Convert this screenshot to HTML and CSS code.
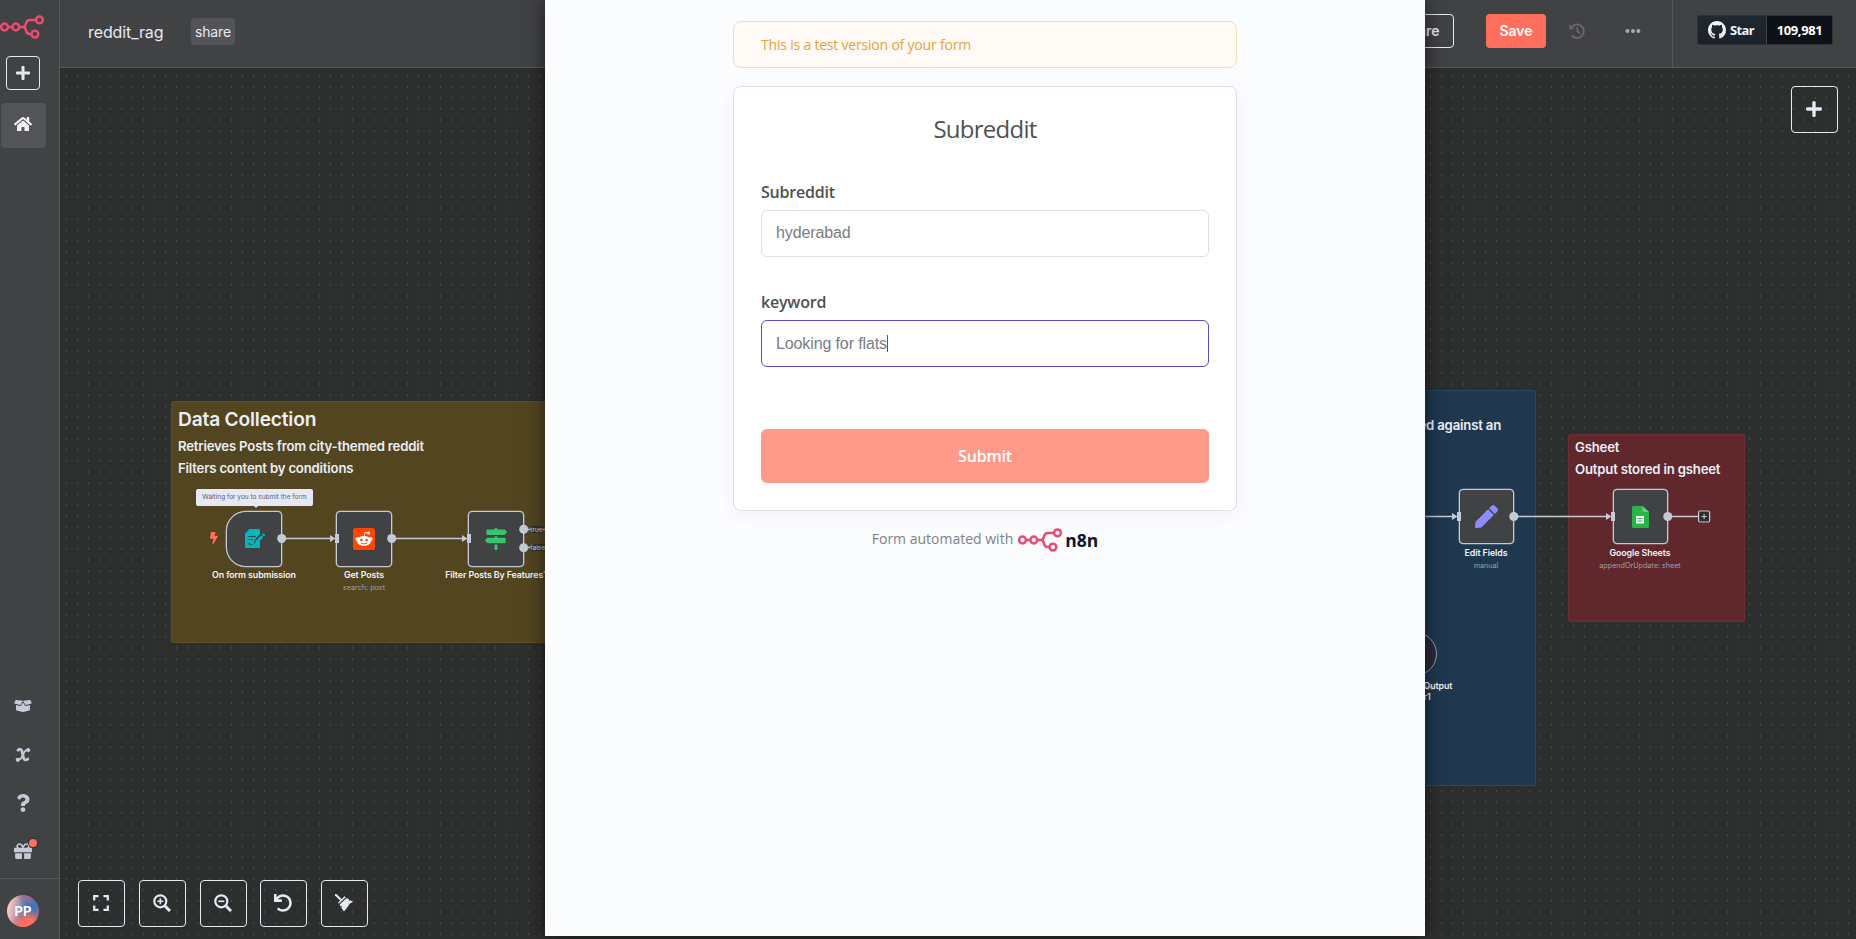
FILE: index.html
```
<!DOCTYPE html>
<html lang="en">
<head>
<meta charset="utf-8">
<title>reddit_rag</title>
<link rel="stylesheet" href="styles.css">
</head>
<body>
<svg class="defs" width="0" height="0">
  <symbol id="n8n" viewBox="0 0 44 24"><g fill="none" stroke="#ea4b71" stroke-width="2.5"><circle cx="4.5" cy="12" r="3.4"/><circle cx="15.8" cy="12" r="3.4"/><circle cx="39.5" cy="4.9" r="3.4"/><circle cx="34.900" cy="19.1" r="3.4"/><path d="M8 12h4.4M19.2 12h3.3c1.700 0 2.700-.8 3.100-2.300l.6-1.900c.6-1.900 1.800-2.900 3.700-2.900H36M22.500 12c1.700 0 2.700.8 3.100 2.300l.5 1.900c.6 1.900 1.700 2.900 3.500 2.900h2"/></g></symbol>
  <symbol id="plus" viewBox="0 0 448 512"><path d="M416 208H272V64c0-17.670-14.330-32-32-32h-32c-17.670 0-32 14.330-32 32v144H32c-17.670 0-32 14.330-32 32v32c0 17.670 14.330 32 32 32h144v144c0 17.670 14.330 32 32 32h32c17.670 0 32-14.330 32-32V304h144c17.670 0 32-14.330 32-32v-32c0-17.670-14.330-32-32-32z"/></symbol>
</svg>
<div class="app">
  <nav class="sidebar">
    <svg class="logo"><use href="#n8n"/></svg>
    <button class="side-add"><svg width="14" height="16"><use href="#plus"/></svg></button>
    <div class="side-home"><svg width="18" height="16" viewBox="0 0 576 512"><path d="M280.370 148.260L96 300.110V464a16 16 0 0 0 16 16l112.060-.29a16 16 0 0 0 15.920-16V368a16 16 0 0 1 16-16h64a16 16 0 0 1 16 16v95.640a16 16 0 0 0 16 16.050L464 480a16 16 0 0 0 16-16V300L295.670 148.260a12.190 12.190 0 0 0-15.300 0zM571.600 251.470L488 182.560V44.050a12 12 0 0 0-12-12h-56a12 12 0 0 0-12 12v72.610L318.470 43a48 48 0 0 0-61 0L4.340 251.470a12 12 0 0 0-1.600 16.900l25.500 31A12 12 0 0 0 45.150 301l235.220-193.740a12.190 12.190 0 0 1 15.300 0L530.900 301a12 12 0 0 0 16.900-1.600l25.500-31a12 12 0 0 0-1.700-16.930z"/></svg></div>
    <div class="side-links">
      <div class="side-link"><svg width="18" height="14" viewBox="0 0 640 512"><path d="M425.700 256c-16.900 0-32.800-9-41.400-23.400L320 126l-64.200 106.600c-8.700 14.500-24.600 23.500-41.500 23.500-4.500 0-9-.6-13.300-1.900L64 215v178c0 14.700 10 27.500 24.200 31l216.200 54.100c10.200 2.500 20.900 2.500 31 0L551.800 424c14.200-3.600 24.200-16.400 24.200-31V215l-137 39.100c-4.300 1.300-8.800 1.900-13.300 1.900zm212.600-112.200L586.800 41c-3.100-6.200-9.800-9.800-16.700-8.900L320 64l91.700 152.100c3.800 6.300 11.400 9.300 18.500 7.300l197.900-56.500c9.900-2.900 14.700-13.900 10.200-23.100zM53.200 41L1.700 143.800c-4.600 9.200.3 20.200 10.100 23l197.900 56.500c7.100 2 14.700-1 18.500-7.300L320 64 69.800 32.100c-6.900-.8-13.500 2.700-16.600 8.900z"/></svg></div>
      <div class="side-link var"><svg width="16" height="16" viewBox="0 0 16 16"><g fill="none" stroke="#c6cad6" stroke-linecap="round"><path d="M3 3.200C4.600 1.600 6.400 2 7 4.200l1.500 6.600c.5 2.300 2.400 2.700 4.300 1.200" stroke-width="2.800"/><path d="M13.200 3c-2.700-.4-4 2-5 4.400-1.300 3.200-2.600 5.700-5.200 5.300" stroke-width="1.800"/></g><circle cx="13.200" cy="3.100" r="2.100"/><circle cx="2.800" cy="12.800" r="2.100"/></svg></div>
      <div class="side-link var"><svg width="14" height="18" viewBox="0 0 384 512"><path d="M202.021 0C122.202 0 70.503 32.703 29.914 91.026c-7.363 10.580-5.093 25.086 5.178 32.874l43.138 32.709c10.373 7.865 25.132 6.026 33.253-4.148 25.049-31.381 43.630-49.449 82.757-49.449 30.764 0 68.816 19.799 68.816 49.631 0 22.552-18.617 34.134-48.993 51.164-35.423 19.860-82.299 44.576-82.299 106.405V320c0 13.255 10.745 24 24 24h72.471c13.255 0 24-10.745 24-24v-5.773c0-42.860 125.268-44.645 125.268-160.627C377.504 66.256 286.902 0 202.021 0zM192 373.459c-38.196 0-69.271 31.075-69.271 69.271 0 38.195 31.075 69.270 69.271 69.270s69.271-31.075 69.271-69.271-31.075-69.270-69.271-69.270z"/></svg></div>
      <div class="side-link"><svg width="18" height="18" viewBox="0 0 512 512"><path d="M32 448c0 17.700 14.300 32 32 32h160V320H32v128zm256 32h160c17.700 0 32-14.300 32-32V320H288v160zm192-320h-42.100c6.200-12.100 10.100-25.500 10.100-40 0-48.500-39.500-88-88-88-41.600 0-68.500 21.300-103 68.300-34.500-47-61.400-68.300-103-68.300-48.500 0-88 39.500-88 88 0 14.500 3.800 27.900 10.100 40H32c-17.700 0-32 14.300-32 32v80c0 8.800 7.200 16 16 16h480c8.800 0 16-7.200 16-16v-80c0-17.700-14.300-32-32-32zm-326.100 0c-22.100 0-40-17.900-40-40s17.900-40 40-40c19.900 0 34.600 3.300 86.100 80h-86.100zm206.100 0h-86.100c51.400-76.500 65.700-80 86.100-80 22.100 0 40 17.900 40 40s-17.900 40-40 40z"/></svg><span class="badge"></span></div>
    </div>
    <div class="side-user"><span class="avatar">PP</span></div>
  </nav>
  <div class="main">
    <header class="header">
      <span class="wf-name">reddit_rag</span><span class="tag">share</span>
      <div class="actions">
        <button class="btn-share">Share</button>
        <button class="btn-save">Save</button>
        <svg class="history" width="16" height="16" viewBox="0 0 16 16"><g fill="none" stroke="#67686a" stroke-width="2"><path d="M2.600 4.300A6.700 6.700 0 1 1 3.400 13" stroke-linecap="round"/><path d="M8.300 4.500v4l2.300 1.700" stroke-width="1.600" stroke-linecap="round"/></g><path d="M.3 1v5.200h5.200z" fill="#67686a"/></svg>
        <svg class="dots" width="16" height="6" viewBox="0 0 16 6"><circle cx="2.400" cy="3" r="2"/><circle cx="8" cy="3" r="2"/><circle cx="13.400" cy="3" r="2"/></svg>
        <div class="gh-area"><div class="gh"><span class="gh-star"><svg width="18" height="18" viewBox="0 0 16 16"><path d="M8 0C3.580 0 0 3.580 0 8c0 3.540 2.290 6.530 5.470 7.590.4.070.55-.17.55-.38 0-.19-.01-.82-.01-1.490-2.010.37-2.530-.49-2.690-.94-.09-.23-.48-.94-.82-1.130-.28-.15-.68-.52-.01-.53.63-.01 1.080.58 1.230.82.72 1.210 1.870.87 2.330.66.07-.52.28-.87.51-1.070-1.780-.2-3.640-.89-3.640-3.950 0-.87.31-1.590.82-2.150-.08-.2-.36-1.020.08-2.120 0 0 .67-.21 2.200.82.64-.18 1.320-.27 2-.27.68 0 1.360.09 2 .27 1.530-1.040 2.200-.82 2.200-.82.44 1.100.16 1.920.08 2.120.51.56.82 1.270.82 2.150 0 3.070-1.870 3.750-3.650 3.950.29.25.54.73.54 1.480 0 1.070-.01 1.930-.01 2.200 0 .21.15.46.55.38A8.013 8.013 0 0 0 16 8c0-4.420-3.580-8-8-8z"/></svg>Star</span><span class="gh-count">109,981</span></div></div>
      </div>
    </header>
    <div class="canvas">
      <section class="sticky yellow"><h1>Data Collection</h1><h2>Retrieves Posts from city-themed reddit</h2><h2>Filters content by conditions</h2></section>
      <section class="sticky blue"><h2>ed against an</h2></section>
      <section class="sticky red"><h2>Gsheet</h2><h2>Output stored in gsheet</h2></section>

      <svg class="edges" width="1796" height="871" viewBox="60 68 1796 871">
        <g stroke="#c6cad6" stroke-width="1.300" fill="none"><path d="M282 538.500H332M392 538.500H464M524 529.500H546M524 547.500H546M1400 516.500H1454M1514 516.500H1608M1668 516.500H1698"/></g>
      </svg>

      <div class="node trigger n-form"><svg width="20" height="20" viewBox="0 0 20 20"><path d="M0 4.500L4.500 0H14a1 1 0 0 1 1 1v4l-5.500 6-.7 3.500 3.400-.8L15 11v7a1 1 0 0 1-1 1H1a1 1 0 0 1-1-1z" fill="#00b7bc"/><path d="M2.800 7.500h8M2.800 10.500h5M3 15.500c1-2 2-2 2.200-.3.700.6 1.500.3 2.300.2" stroke="#414244" stroke-width="1.100" fill="none"/><path d="M10.300 12.200l6-6 2 2-6 6-2.500.6zM17 5.500l.7-.7q.7-.5 1.400.1l.6.6q.6.700 0 1.400l-.7.7z" fill="#00b7bc"/></svg></div>
      <div class="node n-reddit"><svg width="22" height="22" viewBox="0 0 22 22"><rect width="22" height="22" rx="2.500" fill="#ff4500"/><g fill="#fff"><ellipse cx="11" cy="13" rx="7" ry="5"/><circle cx="4.300" cy="11" r="1.900"/><circle cx="17.700" cy="11" r="1.900"/><circle cx="15.700" cy="5" r="1.500"/></g><path d="M11 8.500L12 4.400l3 .6" fill="none" stroke="#fff" stroke-width=".9"/><circle cx="8.400" cy="12" r="1.300" fill="#ff4500"/><circle cx="13.600" cy="12" r="1.300" fill="#ff4500"/><path d="M8 15q3 2 6 0" stroke="#ff4500" stroke-width=".9" fill="none"/></svg></div>
      <div class="node n-filter"><svg width="22" height="22" viewBox="0 0 512 512"><path fill="#37c66f" d="M507.310 84.690L464 41.370c-6-6-14.140-9.370-22.630-9.370H288V16c0-8.840-7.160-16-16-16h-32c-8.840 0-16 7.160-16 16v16H56c-13.250 0-24 10.750-24 24v80c0 13.250 10.750 24 24 24h385.370c8.490 0 16.620-3.370 22.630-9.370l43.310-43.310c6.250-6.260 6.250-16.380 0-22.630zM224 496c0 8.840 7.160 16 16 16h32c8.840 0 16-7.160 16-16V384h-64v112zm232-272H288v-32h-64v32H70.630c-8.490 0-16.620 3.370-22.630 9.370L4.690 276.690c-6.250 6.250-6.250 16.380 0 22.630L48 342.630c6 6 14.140 9.370 22.630 9.370H456c13.250 0 24-10.750 24-24v-80c0-13.250-10.750-24-24-24z"/></svg></div>
      <div class="node n-edit"><svg width="23" height="23" viewBox="0 0 512 512"><path fill="#8b8dff" d="M290.740 93.240l128.020 128.020-277.990 277.990-114.140 12.600C11.350 513.540-1.560 500.620.14 485.340l12.700-114.220 277.900-277.880zm207.200-19.060l-60.110-60.110c-18.750-18.750-49.160-18.750-67.910 0l-56.550 56.550 128.020 128.020 56.550-56.550c18.750-18.760 18.750-49.160 0-67.910z"/></svg></div>
      <div class="node n-sheets"><svg width="17" height="22" viewBox="0 0 17 22"><path d="M1.500 0H10.500L17 6v14.500a1.500 1.500 0 0 1-1.500 1.500h-14A1.500 1.500 0 0 1 0 20.500v-19A1.500 1.500 0 0 1 1.500 0z" fill="#28b446"/><path d="M10.500 0L17 6h-5a1.500 1.500 0 0 1-1.500-1.500z" fill="#6ace7c"/><rect x="4" y="10" width="8" height="7.500" fill="#fff"/><path d="M5 12.500h6M5 15h6M8 11v5.500" stroke="#28b446" stroke-width=".7"/></svg></div>
      <div class="node-circle"></div>

      <svg class="edges" width="1796" height="871" viewBox="60 68 1796 871">
        <g fill="#c6cad6">
          <circle cx="281.700" cy="538.500" r="4.500"/><circle cx="391.700" cy="538.500" r="4.500"/><circle cx="523.700" cy="529.300" r="4.500"/><circle cx="523.700" cy="547.700" r="4.500"/><circle cx="1513.800" cy="516.500" r="4.500"/><circle cx="1667.800" cy="516.500" r="4.500"/>
          <path d="M335 534h4v9h-4zM330 535l5.500 3.500-5.500 3.500zM467 534h4v9h-4zM462 535l5.500 3.500-5.500 3.500zM1457 512h4v9h-4zM1452 513l5.500 3.500-5.500 3.500zM1611 512h4v9h-4zM1606 513l5.500 3.500-5.500 3.500z"/>
        </g>
        <rect x="1698.600" y="511" width="11" height="11" rx="1.500" fill="#2d2e2e" stroke="#c6cad6" stroke-width="1.200"/><path d="M1701.500 516.500h5.200M1704.100 513.900v5.200" stroke="#c6cad6"/>
      </svg>
      <svg class="bolt" width="8" height="12" viewBox="0 0 320 512" preserveAspectRatio="none"><path fill="#ff6f5c" d="M296 160H180.600l42.600-129.800C227.200 15 215.700 0 200 0H56C44 0 33.800 8.900 32.200 20.800l-32 240C-1.700 275.200 9.500 288 24 288h118.700L96.600 482.500c-3.600 15.200 8 29.500 23.300 29.500 8.400 0 16.400-4.400 20.800-12l176-304c9.300-15.900-2.200-36-20.700-36z"/></svg>
      <div class="tip">Waiting for you to submit the form</div>
      <div class="label l-form"><b>On form submission</b></div>
      <div class="label l-reddit"><b>Get Posts</b><span>search: post</span></div>
      <div class="label l-filter"><b>Filter Posts By Features1</b></div>
      <div class="label l-edit"><b>Edit Fields</b><span>manual</span></div>
      <div class="label l-sheets"><b>Google Sheets</b><span>appendOrUpdate: sheet</span></div>
      <span class="port p-true">true</span><span class="port p-false">false</span><span class="port p-parser">Parser</span>
      <div class="label l-parser"><b>Output</b><b class="tail">r1</b></div>

      <button class="ctl add-node"><svg width="16" height="18"><use href="#plus"/></svg></button>
      <div class="controls">
        <button class="ctl"><svg width="16" height="16" viewBox="0 0 16 16"><path d="M1.200 5.500V1.200h4.300M10.500 1.200h4.300v4.300M14.800 10.500v4.300h-4.300M5.500 14.800H1.200v-4.300" fill="none" stroke="#e6e9f3" stroke-width="2.200"/></svg></button>
        <button class="ctl"><svg width="18" height="18" viewBox="0 0 18 18"><g fill="none" stroke="#e6e9f3"><circle cx="7.300" cy="7.300" r="6" stroke-width="2.200"/><path d="M12 12l5 5" stroke-width="3"/><path d="M4.300 7.300h6M7.300 4.300v6" stroke-width="1.600"/></g></svg></button>
        <button class="ctl"><svg width="18" height="18" viewBox="0 0 18 18"><g fill="none" stroke="#e6e9f3"><circle cx="7.300" cy="7.300" r="6" stroke-width="2.200"/><path d="M12 12l5 5" stroke-width="3"/><path d="M4.300 7.300h6" stroke-width="1.600"/></g></svg></button>
        <button class="ctl"><svg width="18" height="18" viewBox="0 0 512 512"><path d="M212.333 224.333H12c-6.627 0-12-5.373-12-12V12C0 5.373 5.373 0 12 0h48c6.627 0 12 5.373 12 12v78.112C117.773 39.279 184.260 7.470 258.175 8.007c136.906.994 246.448 111.623 246.157 248.532C504.041 393.258 393.120 504 256.333 504c-64.089 0-122.496-24.313-166.510-64.215-5.099-4.622-5.334-12.554-.467-17.420l33.967-33.967c4.474-4.474 11.662-4.717 16.401-.525C170.760 415.336 211.580 432 256.333 432c97.268 0 176-78.716 176-176 0-97.267-78.716-176-176-176-58.496 0-110.280 28.476-142.274 72.333h98.274c6.627 0 12 5.373 12 12v48c0 6.627-5.373 12-12 12z"/></svg></button>
        <button class="ctl"><svg width="18" height="18" viewBox="0 0 18 18"><path d="M.8.800l5 5" stroke="#e6e9f3" stroke-width="2" stroke-linecap="round"/><path d="M9.500 2.300L2.800 9l1.200.6 6.800-6.300zM11.300 4.200L4.700 10.400l.8 2 1.600-.3-.8 1.700 2.700 3.600 3.600-4.500 2.200-3.500L18 8l-2.500-1.700-1.800.4.400-1.600z"/></svg></button>
      </div>
    </div>
  </div>
</div>

<div class="popup">
  <div class="form-col">
    <div class="banner">This is a test version of your form</div>
    <form class="card">
      <h1 class="form-title">Subreddit</h1>
      <label class="field-label">Subreddit</label>
      <div class="input first">hyderabad</div>
      <label class="field-label second">keyword</label>
      <div class="input focus">Looking for flats<i class="caret"></i></div>
      <div class="submit">Submit</div>
    </form>
    <div class="foot"><span>Form automated with</span><svg class="logo"><use href="#n8n"/></svg><b>n8n</b></div>
  </div>
</div>
</body>
</html>
```
FILE: styles.css
```
* { box-sizing: border-box; }
body { margin: 0; width: 1856px; height: 939px; overflow: hidden; position: relative; background: #2d2e2e; font-family: Inter, sans-serif; color: #e6e9f3; }
button { margin: 0; padding: 0; font-family: inherit; color: inherit; background: none; display: flex; align-items: center; justify-content: center; }
svg { display: block; flex: none; }
.defs { position: absolute; }
.logo { width: 44px; height: 24px; }
.app { display: flex; height: 939px; }

.sidebar { width: 60px; flex: none; background: #414244; border-right: 1px solid #58595b; display: flex; flex-direction: column; padding-top: 15px; fill: #c6cad6; }
.side-add { width: 34px; height: 34px; margin: 17px 0 0 6px; border: 1px solid #e6e9f3; border-radius: 4px; fill: #e6e9f3; }
.side-home { width: 45px; height: 45px; margin: 13px 0 0 1px; border-radius: 4px; background: #535457; fill: #f4f5fa; display: flex; align-items: center; justify-content: center; padding: 0 1px 3px 0; }
.side-links { margin-top: auto; display: flex; flex-direction: column; }
.side-link { width: 46px; height: 48.400px; position: relative; display: flex; align-items: center; justify-content: center; }
.var { padding-top: 2px; }
.badge { position: absolute; left: 29px; top: 12px; width: 8px; height: 8px; border-radius: 50%; background: #ff6f5c; box-shadow: 0 0 0 1px #303133; }
.side-user { height: 61px; margin-top: 3px; border-top: 1px solid #58595b; padding: 16px 0 0 7px; }
.avatar { width: 32px; height: 32px; border-radius: 50%; display: flex; align-items: center; justify-content: center; font-size: 13px; font-weight: 700; color: #fff; background: radial-gradient(circle at 65% 100%, #ff6f5c 20%, transparent 48%), radial-gradient(circle at 65% 0, #a06a8c 5%, transparent 30%), linear-gradient(100deg, #f9c9c0 10%, #c6a0b4 30%, #3c76bd 55%, #3c76bd 75%, #8d6799); }

.main { flex: 1; display: flex; flex-direction: column; }
.header { height: 68px; background: #414244; border-bottom: 1px solid #58595b; display: flex; align-items: flex-start; }
.wf-name { margin: 20px 0 0 28px; width: 103px; font-size: 16px; line-height: 24px; letter-spacing: -.1px; }
.tag { margin-top: 18px; width: 44px; height: 27px; line-height: 28px; border-radius: 4px; background: #535457; font-size: 14px; text-align: center; letter-spacing: -.15px; }
.actions { margin-left: auto; display: flex; align-items: center; height: 67px; padding-right: 23px; }
.actions button { height: 34px; border-radius: 4px; font-size: 14px; font-weight: 600; margin-bottom: 5px; padding-bottom: 1px; }
.btn-share { width: 68px; border: 1px solid #e6e9f3; }
.btn-save { width: 60px; margin-left: 32px; background: #ff6f5c; border: 0; color: #fff; }
.history { margin: 0 0 5px 23px; }
.dots { margin: 0 31px 5px 40px; fill: #a9acb7; }
.gh-area { height: 67px; border-left: 1px solid #58595b; padding: 15px 0 0 24px; }
.gh { display: flex; width: 136px; height: 30px; border-radius: 2px; overflow: hidden; font: 700 13px/29px "Noto Sans", sans-serif; letter-spacing: -.4px; border: 1px solid #2c333b; color: #f0f3f6; fill: #f0f3f6; }
.gh-star { width: 68px; background: linear-gradient(#212830, #1c2128); display: flex; align-items: center; gap: 4px; padding-left: 10px; letter-spacing: -.65px; }
.gh-count { flex: 1; background: #0d1117; border-left: 1px solid #3d444d; text-align: center; color: #fff; }

.canvas { flex: 1; position: relative; overflow: hidden; background-color: #2d2e2e; background-image: linear-gradient(90deg, #515252 1px, transparent 1px), linear-gradient(#2d2e2e 9px, transparent 9px); background-image: conic-gradient(from 0deg at 1px 2px, transparent 270deg, #4a4b4b 0); background-size: 11px 11px; background-position: 6px 7px; }
.edges { position: absolute; left: 0; top: 0; }
.sticky { position: absolute; border: 1px solid; border-radius: 2px; padding-left: 6px; }
.sticky h1, .sticky h2 { margin: 0; font-weight: 600; white-space: nowrap; color: #eceef5; }
.sticky h1 { font-size: 19.200px; line-height: 24px; margin: 5px 0 4px; letter-spacing: -.2px; }
.sticky h2 { font-size: 13.200px; line-height: 22px; letter-spacing: -.2px; }
.yellow { left: 111px; top: 333px; width: 440px; height: 242px; background: #524520; border-color: #5e4f22; }
.blue { left: 1300px; top: 322px; width: 176px; height: 396px; background: #1f3850; border-color: #24476a; }
.blue h2 { position: absolute; right: 34px; top: 23px; }
.red { left: 1508px; top: 366px; width: 177px; height: 188px; background: #60272d; border-color: #702c33; padding-top: 1px; }
.node { position: absolute; width: 56px; height: 56px; background: #414244; border: 1px solid #c6cad6; border-radius: 4px; display: flex; align-items: center; justify-content: center; box-shadow: 0 0 0 .3px #c6cad6; }
.trigger { border-radius: 20px 4px 4px 20px; padding-left: 2px; }
.n-form { left: 166px; top: 443px; }
.n-reddit { left: 276px; top: 443px; }
.n-filter { left: 408px; top: 443px; }
.n-edit { left: 1399px; top: 421px; width: 55px; height: 55px; }
.n-sheets { left: 1553px; top: 421px; width: 55px; height: 55px; }
.node-circle { position: absolute; left: 1333px; top: 564px; width: 44px; height: 44px; border-radius: 50%; background: #2b2b38; border: 1px solid #9b9ea8; }
.bolt { position: absolute; left: 150px; top: 464px; }
.tip { position: absolute; left: 136px; top: 421px; width: 117px; height: 17px; border-radius: 2px; background: #e6e9f3; color: #5d5f6b; font-size: 6.500px; line-height: 16px; text-align: center; }
.tip::after { content: ""; position: absolute; left: 58px; top: 17px; border: 2.500px solid transparent; border-top-color: #e6e9f3; border-bottom: 0; }
.label { position: absolute; width: 120px; display: flex; flex-direction: column; align-items: center; white-space: nowrap; font-size: 8.800px; line-height: 12px; }
.label b { font-weight: 600; color: #f2f4fa; letter-spacing: -.08px; }
.label span { font-size: 7.200px; line-height: 13px; color: #9ea0a7; }
.l-form { left: 134px; top: 501px; }
.l-reddit { left: 244px; top: 501px; }
.l-filter { left: 376px; top: 501px; }
.l-edit { left: 1366px; top: 479px; }
.l-sheets { left: 1520px; top: 479px; }
.l-parser { left: 1318px; top: 612px; line-height: 11px; }
.label .tail { margin-right: 22px; }
.port { position: absolute; font-size: 6.800px; line-height: 7px; color: #c6cad6; background: rgba(45, 46, 46, .8); }
.p-true { left: 470px; top: 458px; }
.p-false { left: 470px; top: 476px; }
.p-parser { left: 1355px; top: 616px; color: #8a8d99; }
.ctl { width: 47px; height: 47px; border: 1px solid #e6e9f3; border-radius: 4px; fill: #e6e9f3; flex: none; padding: 0 1px 1px 0; }
.add-node { position: absolute; left: 1731px; top: 18px; }
.controls { position: absolute; left: 18px; top: 812px; display: flex; gap: 13.800px; }

.popup { position: absolute; left: 545px; top: 0; width: 880px; height: 936px; background: #fbfcfe; box-shadow: 0 0 18px rgba(0, 0, 0, .6); display: flex; justify-content: center; font-family: "Open Sans", sans-serif; color: #4f5054; }
.form-col { width: 504px; padding-top: 21px; }
.banner { height: 47px; border: 1px solid #f6dcb7; border-radius: 8px; background: #fffaf5; color: #e6a23d; font-size: 14px; line-height: 46px; padding-left: 27px; letter-spacing: -.2px; }
.card { height: 425px; margin-top: 18px; border: 1px solid #dbdfe7; border-radius: 8px; background: #fff; padding: 25px 27px 0; box-shadow: 0 4px 16px rgba(99, 77, 255, .06); }
.form-title { margin: 0 0 36px; font-size: 24px; line-height: 33px; font-weight: 400; text-align: center; letter-spacing: -.75px; }
.field-label { display: block; font-size: 16px; font-weight: 600; line-height: 22px; margin-bottom: 7px; letter-spacing: -.2px; }
.second { margin-top: 34px; }
.input { height: 47px; border: 1px solid #dbdfe7; border-radius: 6px; padding-left: 14px; font: 16px/43px "Liberation Sans", Arial, sans-serif; color: #7a7c82; display: flex; align-items: center; letter-spacing: -.12px; }
.first { padding-bottom: 2px; }
.focus { border-color: #5a4cc2; }
.caret { width: 1px; height: 17px; background: #555; }
.submit { height: 54px; margin-top: 62px; border-radius: 6px; background: #ff998a; color: #fff; font-size: 16px; font-weight: 600; line-height: 54px; text-align: center; letter-spacing: -.2px; }
.foot { display: flex; align-items: center; justify-content: center; margin-top: 16px; height: 24px; font-size: 14px; color: #7e8186; padding-bottom: 2px; }
.foot .logo { margin: 3px 3px 0 5px; }
.foot b { font: 700 17.500px/24px "Open Sans", sans-serif; color: #101330; margin-top: 3px; }
```
